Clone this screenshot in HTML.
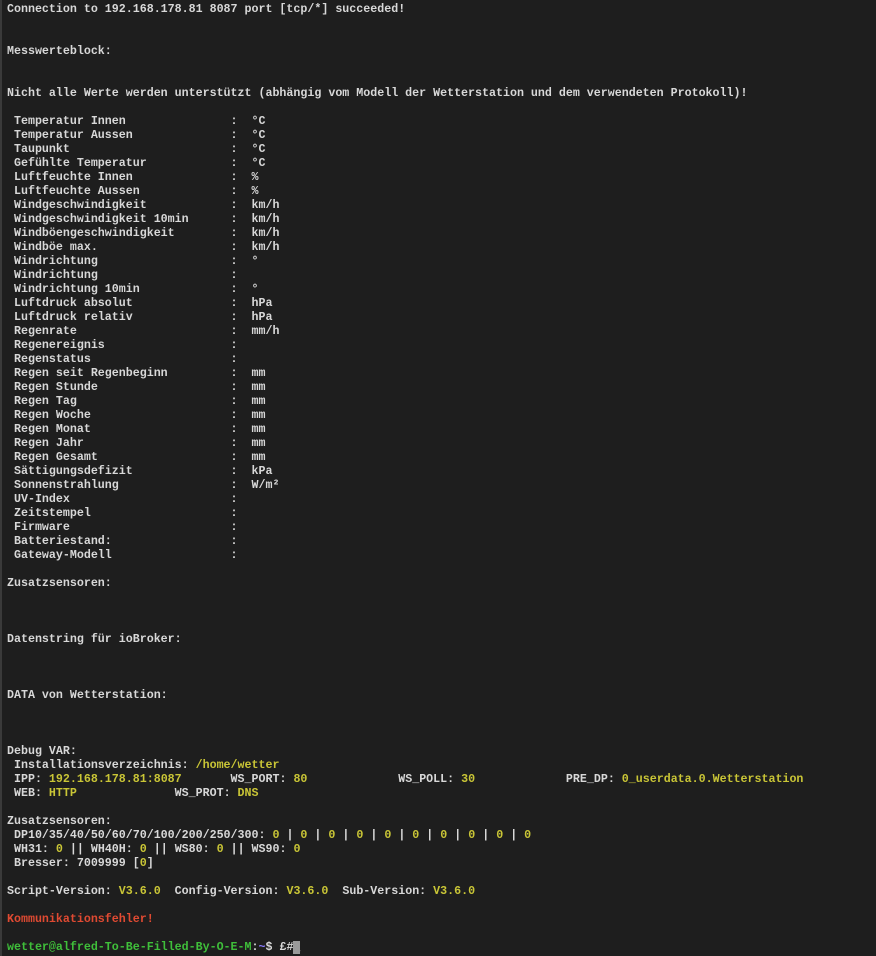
<!DOCTYPE html>
<html><head><meta charset="utf-8"><style>
html,body{margin:0;padding:0;background:#1e1e1e;width:876px;height:956px;overflow:hidden}
body{border-left:2px solid #3a3a3a;box-sizing:border-box}
pre{margin:0;padding:3px 0 0 5px;font-family:"Liberation Mono",monospace;font-weight:bold;font-size:11.65px;line-height:14px;color:#d8d8d8;white-space:pre}
.y{color:#c9c536}.r{color:#e04a32}.g{color:#3fbf3a}.b{color:#8a7bff}
.c{background:#9a9a9a;color:#9a9a9a}
</style></head><body><pre>Connection to 192.168.178.81 8087 port [tcp/*] succeeded!


Messwerteblock:


Nicht alle Werte werden unterstützt (abhängig vom Modell der Wetterstation und dem verwendeten Protokoll)!

 Temperatur Innen               :  °C
 Temperatur Aussen              :  °C
 Taupunkt                       :  °C
 Gefühlte Temperatur            :  °C
 Luftfeuchte Innen              :  %
 Luftfeuchte Aussen             :  %
 Windgeschwindigkeit            :  km/h
 Windgeschwindigkeit 10min      :  km/h
 Windböengeschwindigkeit        :  km/h
 Windböe max.                   :  km/h
 Windrichtung                   :  °
 Windrichtung                   :
 Windrichtung 10min             :  °
 Luftdruck absolut              :  hPa
 Luftdruck relativ              :  hPa
 Regenrate                      :  mm/h
 Regenereignis                  :
 Regenstatus                    :
 Regen seit Regenbeginn         :  mm
 Regen Stunde                   :  mm
 Regen Tag                      :  mm
 Regen Woche                    :  mm
 Regen Monat                    :  mm
 Regen Jahr                     :  mm
 Regen Gesamt                   :  mm
 Sättigungsdefizit              :  kPa
 Sonnenstrahlung                :  W/m²
 UV-Index                       :
 Zeitstempel                    :
 Firmware                       :
 Batteriestand:                 :
 Gateway-Modell                 :

Zusatzsensoren:



Datenstring für ioBroker:



DATA von Wetterstation:



Debug VAR:
 Installationsverzeichnis: <span class="y">/home/wetter</span>
 IPP: <span class="y">192.168.178.81:8087</span>       WS_PORT: <span class="y">80</span>             WS_POLL: <span class="y">30</span>             PRE_DP: <span class="y">0_userdata.0.Wetterstation</span>
 WEB: <span class="y">HTTP</span>              WS_PROT: <span class="y">DNS</span>

Zusatzsensoren:
 DP10/35/40/50/60/70/100/200/250/300: <span class="y">0</span> | <span class="y">0</span> | <span class="y">0</span> | <span class="y">0</span> | <span class="y">0</span> | <span class="y">0</span> | <span class="y">0</span> | <span class="y">0</span> | <span class="y">0</span> | <span class="y">0</span>
 WH31: <span class="y">0</span> || WH40H: <span class="y">0</span> || WS80: <span class="y">0</span> || WS90: <span class="y">0</span>
 Bresser: 7009999 [<span class="y">0</span>]

Script-Version: <span class="y">V3.6.0</span>  Config-Version: <span class="y">V3.6.0</span>  Sub-Version: <span class="y">V3.6.0</span>

<span class="r">Kommunikationsfehler!</span>

<span class="g">wetter@alfred-To-Be-Filled-By-O-E-M</span>:<span class="b">~</span>$ £#<span class="c">_</span></pre></body></html>
